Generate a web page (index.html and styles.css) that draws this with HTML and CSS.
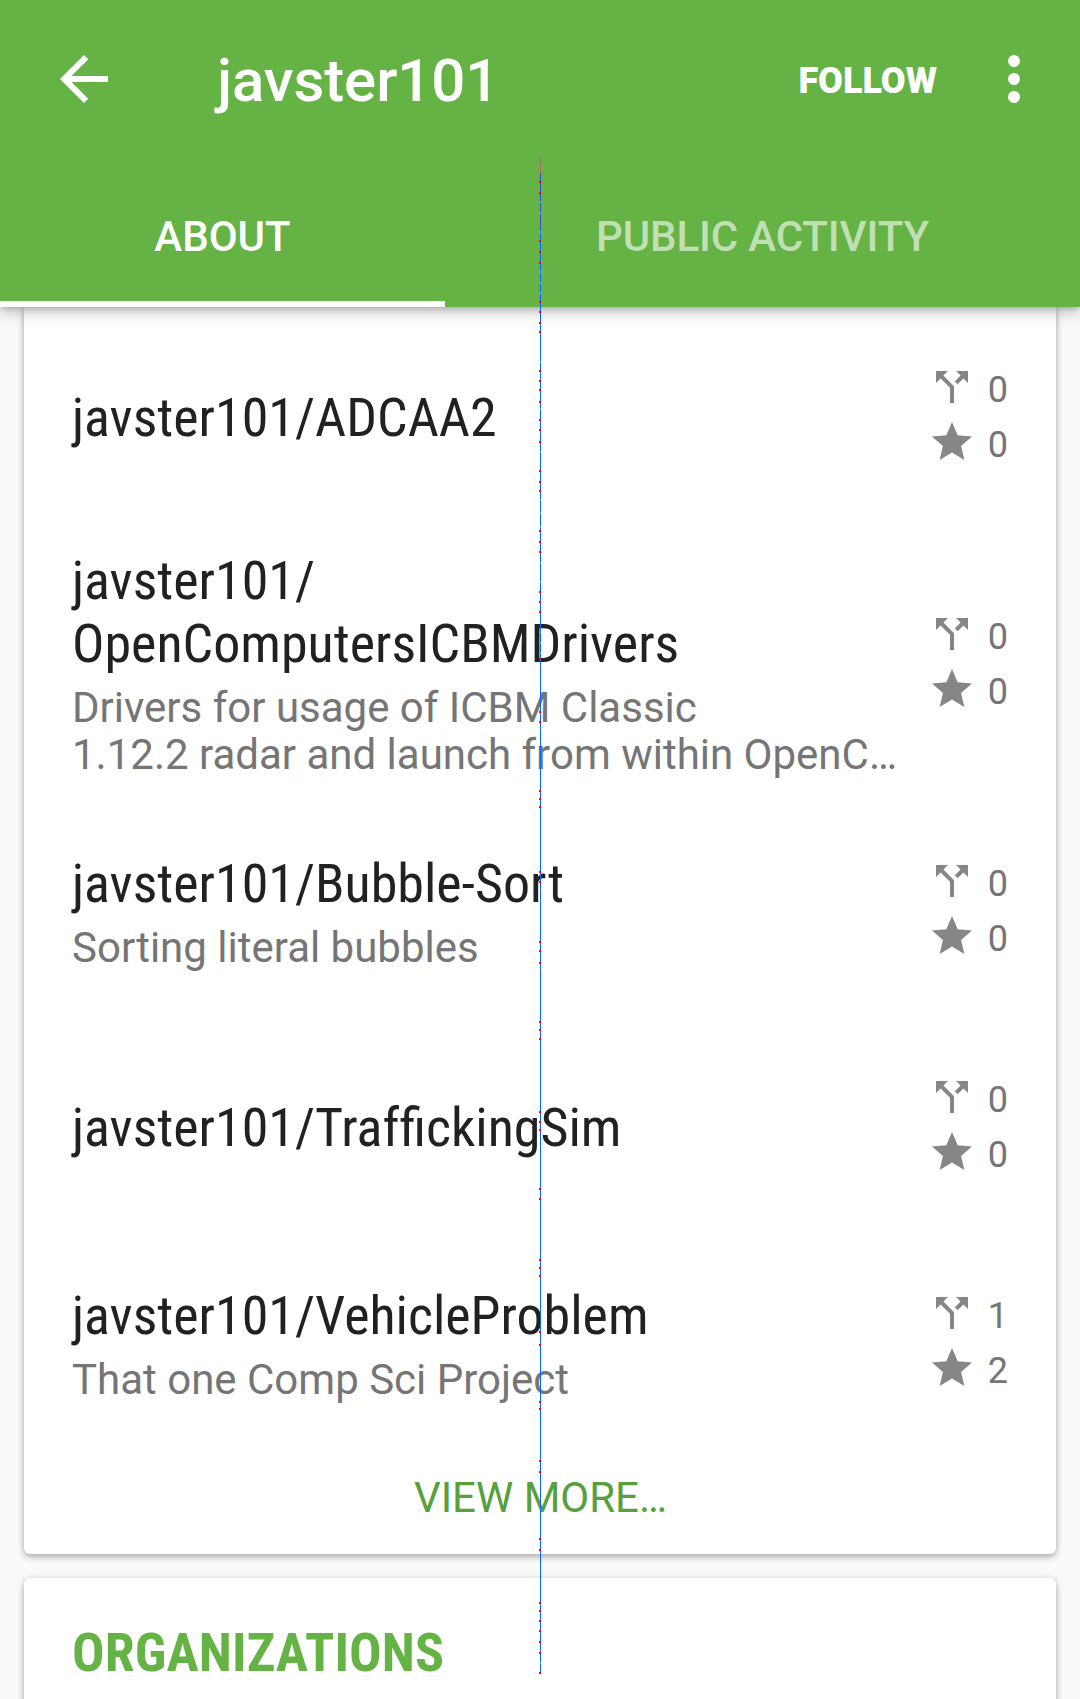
FILE: index.html
```html
<!DOCTYPE html>
<html lang="en">
<head>
<meta charset="utf-8">
<title>javster101</title>
<link rel="stylesheet" href="styles.css">
</head>
<body>
<svg class="defs" aria-hidden="true">
  <symbol id="fork" viewBox="0 0 24 24"><path d="M14 4l2.29 2.29-2.88 2.88 1.42 1.42 2.88-2.88L20 10V4zM10 4H4v6l2.29-2.29 4.71 4.7V20h2v-8.41l-5.29-5.3z"/></symbol>
  <symbol id="star" viewBox="0 0 24 24"><path d="M12 17.27L18.18 21l-1.64-7.03L22 9.24l-7.19-.61L12 2 9.19 8.63 2 9.24l5.46 4.73L5.82 21z"/></symbol>
</svg>
<header class="header">
  <div class="toolbar">
    <svg class="nav-icon" viewBox="0 0 24 24"><path d="M20 11H7.83l5.59-5.59L12 4l-8 8 8 8 1.41-1.41L7.83 13H20z"/></svg>
    <h1 class="title">javster101</h1>
    <span class="follow">FOLLOW</span>
    <svg class="nav-icon" viewBox="0 0 24 24"><circle cx="12" cy="6" r="2"/><circle cx="12" cy="12" r="2"/><circle cx="12" cy="18" r="2"/></svg>
  </div>
  <nav class="tabs">
    <span class="tab tab-active">ABOUT</span>
    <span class="tab tab-wide">PUBLIC ACTIVITY</span>
  </nav>
</header>
<main class="content">
  <section class="card repos">
    <article class="repo">
      <div class="info"><h2 class="name">javster101/ADCAA2</h2></div>
      <div class="stats">
        <div class="stat"><svg class="icon"><use href="#fork"/></svg><span class="count">0</span></div>
        <div class="stat"><svg class="icon"><use href="#star"/></svg><span class="count">0</span></div>
      </div>
    </article>
    <article class="repo repo-tall">
      <div class="info"><h2 class="name">javster101/<br>OpenComputersICBMDrivers</h2><p class="desc">Drivers for usage of ICBM Classic<br>1.12.2 radar and launch from within OpenC…</p></div>
      <div class="stats">
        <div class="stat"><svg class="icon"><use href="#fork"/></svg><span class="count">0</span></div>
        <div class="stat"><svg class="icon"><use href="#star"/></svg><span class="count">0</span></div>
      </div>
    </article>
    <article class="repo">
      <div class="info"><h2 class="name">javster101/Bubble-Sort</h2><p class="desc">Sorting literal bubbles</p></div>
      <div class="stats">
        <div class="stat"><svg class="icon"><use href="#fork"/></svg><span class="count">0</span></div>
        <div class="stat"><svg class="icon"><use href="#star"/></svg><span class="count">0</span></div>
      </div>
    </article>
    <article class="repo">
      <div class="info"><h2 class="name">javster101/Traf&zwnj;fickingSim</h2></div>
      <div class="stats">
        <div class="stat"><svg class="icon"><use href="#fork"/></svg><span class="count">0</span></div>
        <div class="stat"><svg class="icon"><use href="#star"/></svg><span class="count">0</span></div>
      </div>
    </article>
    <article class="repo">
      <div class="info"><h2 class="name">javster101/VehicleProblem</h2><p class="desc">That one Comp Sci Project</p></div>
      <div class="stats">
        <div class="stat"><svg class="icon"><use href="#fork"/></svg><span class="count">1</span></div>
        <div class="stat"><svg class="icon"><use href="#star"/></svg><span class="count">2</span></div>
      </div>
    </article>
    <div class="more">VIEW MORE…</div>
  </section>
  <section class="card orgs"><h2 class="heading">ORGANIZATIONS</h2></section>
</main>
<svg class="trace" viewBox="0 0 2 1516" aria-hidden="true">
  <path class="trace-start" d="M1 0h1v6h-1z"/>
  <path class="trace-pink" d="M1 6h1v10h-1z"/>
  <path class="trace-dark" d="M1 16h1v57h-1z"/>
  <path class="trace-line" d="M1 73h1v1443h-1z"/>
  <path class="trace-cyan" d="M1.5 44v2M1.5 55v2M1.5 74v2M1.5 114v2M1.5 125v2M1.5 135v2M1.5 204v2M1.5 251v2M1.5 294v2M1.5 342v2M1.5 355v2M1.5 369v2M1.5 405v2M1.5 424v2M1.5 474v2M1.5 485v2M1.5 495v2M1.5 1505v2"/>
  <path class="trace-dots" d="M1 24v2M1 35v2M1 83v2M1 94v2M1 105v2M1 144v2M1 154v2M1 165v2M1 174v2M1 213v2M1 223v2M1 232v2M1 244v2M1 262v2M1 272v2M1 284v2M1 313v2M1 324v2M1 333v2M1 373v2M1 384v2M1 394v2M1 434v2M1 444v2M1 454v2M1 501v2M1 554v2M1 564v2M1 633v2M1 641v2M1 649v2M1 714v2M1 724v2M1 784v2M1 793v2M1 805v2M1 864v2M1 872v2M1 881v2M1 954v2M1 964v2M1 972v2M1 1031v2M1 1041v2M1 1102v2M1 1110v2M1 1118v2M1 1174v2M1 1187v2M1 1244v2M1 1251v2M1 1303v2M1 1314v2M1 1381v2M1 1392v2M1 1445v2M1 1453v2M1 1463v2M1 1473v2M1 1484v2M1 1495v2M1 1515v2"/>
</svg>
</body>
</html>
```

FILE: styles.css
```css
* { box-sizing: border-box; }
body {
  margin: 0;
  height: 1699px;
  overflow: hidden;
  display: flex;
  flex-direction: column;
  background: #fafafa;
  color: #212121;
  font-family: Roboto, "Liberation Sans", sans-serif;
}
h1, h2, p { margin: 0; font-weight: 400; }
.defs { display: none; }

.header {
  position: relative;
  flex: none;
  height: 307px;
  background: #65b245;
  color: #fff;
  box-shadow: 0 4px 14px rgba(0, 0, 0, .28), 0 2px 5px rgba(0, 0, 0, .12);
}
.toolbar {
  display: flex;
  align-items: center;
  height: 158px;
  padding: 0 30px 0 48px;
}
.nav-icon { flex: none; width: 72px; height: 72px; fill: currentColor; }
.title {
  flex: 1;
  padding: 3px 0 0 97px;
  font-size: 60px;
  line-height: 70px;
  font-weight: 500;
  letter-spacing: -.1px;
}
.follow {
  margin-right: 41px;
  padding-top: 3px;
  font-size: 36px;
  font-weight: 900;
}
.tabs { display: flex; height: 149px; }
.tab {
  width: 445px;
  padding-top: 54px;
  text-align: center;
  font-size: 42px;
  line-height: 49px;
  font-weight: 500;
  color: rgba(255, 255, 255, .6);
}
.tab-active { color: #fff; border-bottom: 6px solid #fff; }
.tab-wide { width: 635px; letter-spacing: -.15px; }

.content { display: flex; flex-direction: column; gap: 24px; padding: 0 24px; }
.card {
  background: #fff;
  border-radius: 6px;
  box-shadow: 0 3px 6px rgba(0, 0, 0, .25), 0 1px 9px rgba(0, 0, 0, .12);
}
.repos { height: 1247px; border-radius: 0 0 6px 6px; }
.repo {
  display: flex;
  align-items: center;
  justify-content: space-between;
  height: 216px;
  padding: 0 48px;
}
.repo-tall { height: 278px; }
.info { padding-top: 5px; white-space: nowrap; }
.repo-tall .info { padding-top: 3px; }
.name, .heading {
  font-family: "Roboto Condensed", Roboto, sans-serif;
  font-stretch: 75%;
  font-size: 54px;
  line-height: 63px;
}
.desc {
  margin-top: 9px;
  font-size: 42px;
  line-height: 47px;
  color: #757575;
}
.stats { display: flex; flex-direction: column; gap: 7px; padding-bottom: 2px; }
.stat { display: flex; align-items: center; gap: 12px; height: 48px; }
.icon { width: 48px; height: 48px; fill: #868686; }
.count { padding-top: 6px; font-size: 36px; line-height: 42px; color: #757575; }
.more {
  padding: 24px 0 0 1px;
  text-align: center;
  font-size: 42px;
  line-height: 49px;
  color: #57a03c;
}
.orgs { height: 200px; padding: 43px 48px; }
.heading { font-weight: 700; letter-spacing: .12px; color: #65b245; }

/* Thin vertical trace drawn over the whole screen */
.trace { position: absolute; left: 539px; top: 157px; width: 2px; height: 1516px; overflow: visible; }
.trace-start { fill: #718256; }
.trace-pink { fill: #bd6472; }
.trace-dark { fill: #354ed0; }
.trace-line { fill: #0865ff; }
.trace-cyan { stroke: #39b5e8; stroke-width: 1; }
.trace-dots { stroke: #f5001d; stroke-width: 2; }
```
